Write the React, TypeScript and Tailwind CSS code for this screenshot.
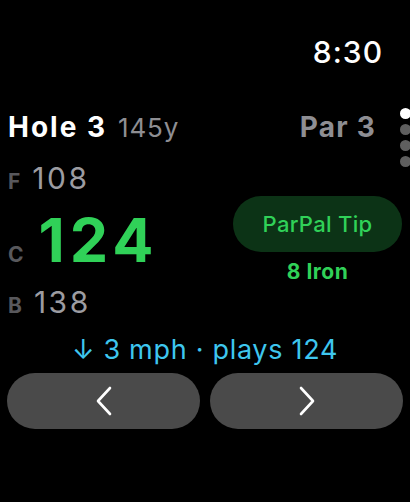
import React from 'react';

const Chevron: React.FC<{ dir: 'left' | 'right' }> = ({ dir }) => (
  <svg width="18" height="30" viewBox="0 0 18 30" fill="none">
    <path
      d={dir === 'left' ? 'M15 2 L3 15 L15 28' : 'M3 2 L15 15 L3 28'}
      stroke="white"
      strokeWidth="2.6"
      strokeLinecap="round"
      strokeLinejoin="round"
    />
  </svg>
);

const DistanceRow: React.FC<{ label: string; value: string; big?: boolean }> = ({ label, value, big }) => (
  <div className={`flex items-baseline ${big ? 'gap-[15px]' : 'gap-[12px]'}`}>
    <span className="font-bold leading-none text-[#58585c] text-[21px]">{label}</span>
    <span
      className={
        big
          ? 'text-[61px] font-bold leading-none text-[#30d158] tracking-[5px]'
          : 'text-[30px] font-normal leading-none text-[#9c9ca1] tracking-[2.5px]'
      }
    >
      {value}
    </span>
  </div>
);

export default function App() {
  return (
    <div
      className="relative w-[410px] h-[502px] bg-black overflow-hidden flex flex-col"
      style={{ fontFamily: 'Inter, "Noto Sans", sans-serif' }}
    >
      {/* time */}
      <div className="mt-[37px] flex justify-end pr-[27px]">
        <span className="text-[30px] leading-none text-white font-medium tracking-[1px]">8:30</span>
      </div>

      {/* hole header */}
      <div className="mt-[46px] flex items-baseline justify-between pl-[8px] pr-[34px]">
        <div className="flex items-baseline gap-[11px]">
          <span className="text-[28px] font-bold leading-none text-white tracking-[2px]">Hole 3</span>
          <span className="text-[26px] leading-none text-[#8e8e93] tracking-[0.8px]">145y</span>
        </div>
        <span className="text-[28px] font-bold leading-none text-[#8e8e93] tracking-[1.2px]">Par 3</span>
      </div>

      {/* distances + tip */}
      <div className="mt-[22px] flex justify-between pl-[8px] pr-[8px]">
        <div className="flex flex-col">
          <DistanceRow label="F" value="108" />
          <div className="mt-[17px]">
            <DistanceRow label="C" value="124" big />
          </div>
          <div className="mt-[16px]">
            <DistanceRow label="B" value="138" />
          </div>
        </div>
        <div className="flex flex-col items-center mt-[33px]">
          <div className="w-[169px] h-[56px] rounded-full bg-[#0c3316] flex items-center justify-center">
            <span className="text-[22px] font-medium text-[#30d158] leading-none tracking-[0.3px]">ParPal Tip</span>
          </div>
          <span className="mt-[9px] text-[21px] font-bold leading-none text-[#30d158] tracking-[0.5px]">8 Iron</span>
        </div>
      </div>

      {/* wind */}
      <div className="mt-[19px] flex justify-center">
        <span className="text-[27px] leading-none text-[#3ec6ee] tracking-[0.7px]">↓ 3 mph · plays 124</span>
      </div>

      {/* nav buttons */}
      <div className="mt-[10px] flex gap-[10px] px-[7px]">
        <button className="flex-1 h-[56px] rounded-full bg-[#4a4a4a] flex items-center justify-center">
          <Chevron dir="left" />
        </button>
        <button className="flex-1 h-[56px] rounded-full bg-[#4a4a4a] flex items-center justify-center">
          <Chevron dir="right" />
        </button>
      </div>

      {/* page dots */}
      <div className="absolute right-0 top-[108px] flex flex-col gap-[5px] translate-x-[1px]">
        <div className="w-[11px] h-[11px] rounded-full bg-white" />
        <div className="w-[11px] h-[11px] rounded-full bg-[#5f5f5f]" />
        <div className="w-[11px] h-[11px] rounded-full bg-[#5f5f5f]" />
        <div className="w-[11px] h-[11px] rounded-full bg-[#5f5f5f]" />
      </div>
    </div>
  );
}
